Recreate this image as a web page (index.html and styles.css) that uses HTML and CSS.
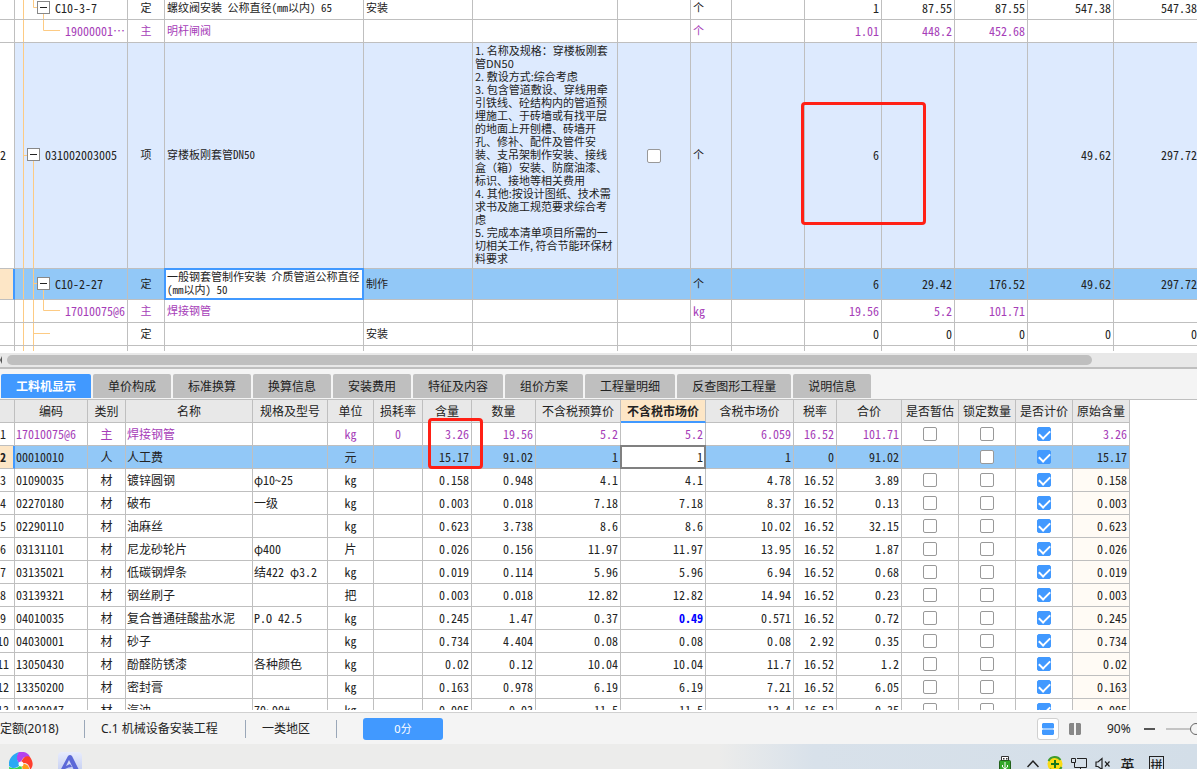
FILE: index.html
```html
<!DOCTYPE html>
<html lang="zh-CN">
<head>
<meta charset="utf-8">
<title>工料机显示</title>
<link rel="stylesheet" href="styles.css">
</head>
<body>
<main class="app">
<section class="pane bill-pane" aria-label="清单">
<table class="grid bill">
<colgroup><col class="w15"><col class="w113"><col class="w37"><col class="w199"><col class="w109"><col class="w145"><col class="w73"><col class="w41"><col class="w73"><col class="w77"><col class="w73"><col class="w73"><col class="w86"><col></colgroup>
<tbody>
<tr class="first"><td><td class="tree"><svg class="guide" aria-hidden="true"><path d="M8.500 0V30M18.500 0V7.500H23M28.500 12V30"/></svg><div class="node lv2"><button class="toggle" aria-label="折叠"></button>C10-3-7</div><td>定<td class="txt">螺纹阀安装 公称直径(mm以内) 65<td class="txt">安装<td><td><td class="txt">个<td><td>1<td>87.55<td>87.55<td>547.38<td>547.38
<tr class="main"><td><td class="tree"><svg class="guide" aria-hidden="true"><path d="M8.500 0V30M28.500 0V10.500H45"/></svg><div class="node lv3">19000001…</div><td>主<td class="txt">明杆闸阀<td><td><td><td class="txt">个<td><td>1.01<td>448.2<td>452.68<td><td>
<tr class="item"><td><div class="rn">2</div><td class="tree"><svg class="guide" aria-hidden="true"><path d="M8.500 0V226M8.500 112.500H13M18.500 116V226"/></svg><div class="node lv1"><button class="toggle" aria-label="折叠"></button>031002003005</div><td>项<td class="txt">穿楼板刚套管DN50<td><td class="txt desc">1. 名称及规格：穿楼板刚套<br>管DN50<br>2. 敷设方式:综合考虑<br>3. 包含管道敷设、穿线用牵<br>引铁线、砼结构内的管道预<br>埋施工、于砖墙或有找平层<br>的地面上开刨槽、砖墙开<br>孔、修补、配件及管件安<br>装、支吊架制作安装、接线<br>盒（箱）安装、防腐油漆、<br>标识、接地等相关费用<br>4. 其他:按设计图纸、技术需<br>求书及施工规范要求综合考<br>虑<br>5. 完成本清单项目所需的一<br>切相关工作, 符合节能环保材<br>料要求<td class="mid"><input type="checkbox" class="check" aria-label="选择清单项"><td class="txt">个<td><td>6<td><td><td>49.62<td>297.72
<tr class="selected"><td class="rowmark"><td class="tree"><svg class="guide" aria-hidden="true"><path d="M8.500 0V31M18.500 0V31M18.500 14.500H23M28.500 20V31"/></svg><div class="node lv2"><button class="toggle" aria-label="折叠"></button>C10-2-27</div><td>定<td class="editing"><textarea class="name-edit" aria-label="名称" spellcheck="false">一般钢套管制作安装 介质管道公称直径
(mm以内) 50</textarea><td class="txt">制作<td><td><td class="txt">个<td><td>6<td>29.42<td>176.52<td>49.62<td>297.72
<tr class="main"><td><td class="tree"><svg class="guide" aria-hidden="true"><path d="M8.500 0V30M18.500 0V30M28.500 0V10.500H45"/></svg><div class="node lv3">17010075@6</div><td>主<td class="txt">焊接钢管<td><td><td><td class="unit">kg<td><td>19.56<td>5.2<td>101.71<td><td>
<tr><td><td class="tree"><svg class="guide" aria-hidden="true"><path d="M8.500 0V30M18.500 0V30M18.500 10.500H35"/></svg><td>定<td><td class="txt">安装<td><td><td><td><td>0<td>0<td>0<td>0<td>0
<tr class="last"><td><td class="tree"><svg class="guide" aria-hidden="true"><path d="M8.500 0V30M18.500 0V30"/></svg><td><td><td><td><td><td><td><td><td><td><td><td>
</tbody>
</table>
<div class="mark mark-bill"></div>
</section>
<div class="hscroll"><span class="arrow"></span><span class="thumb"></span></div>
<nav class="tabs" aria-label="明细">
<button class="tab active">工料机显示</button><button class="tab">单价构成</button><button class="tab">标准换算</button><button class="tab">换算信息</button><button class="tab">安装费用</button><button class="tab">特征及内容</button><button class="tab">组价方案</button><button class="tab">工程量明细</button><button class="tab">反查图形工程量</button><button class="tab">说明信息</button>
</nav>
<section class="pane res-pane" aria-label="工料机显示">
<div class="clip">
<table class="grid res">
<colgroup><col class="w15"><col class="w73"><col class="w38"><col class="w127"><col class="w75"><col class="w46"><col class="w49"><col class="w49"><col class="w64"><col class="w85"><col class="w85"><col class="w88"><col class="w43"><col class="w65"><col class="w57"><col class="w57"><col class="w57"><col class="w57"></colgroup>
<thead>
<tr><th><th>编码<th>类别<th>名称<th>规格及型号<th>单位<th>损耗率<th>含量<th>数量<th>不含税预算价<th class="current">不含税市场价<th>含税市场价<th>税率<th>合价<th>是否暂估<th>锁定数量<th>是否计价<th>原始含量
</thead>
<tbody>
<tr class="main"><td><div class="rn">1</div><td>17010075@6<td>主<td>焊接钢管<td><td>kg<td>0<td>3.26<td>19.56<td>5.2<td>5.2<td>6.059<td>16.52<td>101.71<td><input type="checkbox" class="check" aria-label="是否暂估"><td><input type="checkbox" class="check" aria-label="锁定数量"><td><input type="checkbox" class="check" aria-label="是否计价" checked><td>3.26
<tr class="selected"><td class="rowmark"><div class="rn">2</div><td>00010010<td>人<td>人工费<td><td>元<td><td>15.17<td>91.02<td>1<td class="editing"><input type="text" class="price-edit" aria-label="不含税市场价" value="1"><td>1<td>0<td>91.02<td><td><input type="checkbox" class="check" aria-label="锁定数量"><td><input type="checkbox" class="check" aria-label="是否计价" checked><td>15.17
<tr><td><div class="rn">3</div><td>01090035<td>材<td>镀锌圆钢<td>φ10~25<td>kg<td><td>0.158<td>0.948<td>4.1<td>4.1<td>4.78<td>16.52<td>3.89<td><input type="checkbox" class="check" aria-label="是否暂估"><td><input type="checkbox" class="check" aria-label="锁定数量"><td><input type="checkbox" class="check" aria-label="是否计价" checked><td>0.158
<tr><td><div class="rn">4</div><td>02270180<td>材<td>破布<td>一级<td>kg<td><td>0.003<td>0.018<td>7.18<td>7.18<td>8.37<td>16.52<td>0.13<td><input type="checkbox" class="check" aria-label="是否暂估"><td><input type="checkbox" class="check" aria-label="锁定数量"><td><input type="checkbox" class="check" aria-label="是否计价" checked><td>0.003
<tr><td><div class="rn">5</div><td>02290110<td>材<td>油麻丝<td><td>kg<td><td>0.623<td>3.738<td>8.6<td>8.6<td>10.02<td>16.52<td>32.15<td><input type="checkbox" class="check" aria-label="是否暂估"><td><input type="checkbox" class="check" aria-label="锁定数量"><td><input type="checkbox" class="check" aria-label="是否计价" checked><td>0.623
<tr><td><div class="rn">6</div><td>03131101<td>材<td>尼龙砂轮片<td>φ400<td>片<td><td>0.026<td>0.156<td>11.97<td>11.97<td>13.95<td>16.52<td>1.87<td><input type="checkbox" class="check" aria-label="是否暂估"><td><input type="checkbox" class="check" aria-label="锁定数量"><td><input type="checkbox" class="check" aria-label="是否计价" checked><td>0.026
<tr><td><div class="rn">7</div><td>03135021<td>材<td>低碳钢焊条<td>结422 φ3.2<td>kg<td><td>0.019<td>0.114<td>5.96<td>5.96<td>6.94<td>16.52<td>0.68<td><input type="checkbox" class="check" aria-label="是否暂估"><td><input type="checkbox" class="check" aria-label="锁定数量"><td><input type="checkbox" class="check" aria-label="是否计价" checked><td>0.019
<tr><td><div class="rn">8</div><td>03139321<td>材<td>钢丝刷子<td><td>把<td><td>0.003<td>0.018<td>12.82<td>12.82<td>14.94<td>16.52<td>0.23<td><input type="checkbox" class="check" aria-label="是否暂估"><td><input type="checkbox" class="check" aria-label="锁定数量"><td><input type="checkbox" class="check" aria-label="是否计价" checked><td>0.003
<tr><td><div class="rn">9</div><td>04010035<td>材<td>复合普通硅酸盐水泥<td>P.O 42.5<td>kg<td><td>0.245<td>1.47<td>0.37<td class="changed">0.49<td>0.571<td>16.52<td>0.72<td><input type="checkbox" class="check" aria-label="是否暂估"><td><input type="checkbox" class="check" aria-label="锁定数量"><td><input type="checkbox" class="check" aria-label="是否计价" checked><td>0.245
<tr><td><div class="rn">10</div><td>04030001<td>材<td>砂子<td><td>kg<td><td>0.734<td>4.404<td>0.08<td>0.08<td>0.08<td>2.92<td>0.35<td><input type="checkbox" class="check" aria-label="是否暂估"><td><input type="checkbox" class="check" aria-label="锁定数量"><td><input type="checkbox" class="check" aria-label="是否计价" checked><td>0.734
<tr><td><div class="rn">11</div><td>13050430<td>材<td>酚醛防锈漆<td>各种颜色<td>kg<td><td>0.02<td>0.12<td>10.04<td>10.04<td>11.7<td>16.52<td>1.2<td><input type="checkbox" class="check" aria-label="是否暂估"><td><input type="checkbox" class="check" aria-label="锁定数量"><td><input type="checkbox" class="check" aria-label="是否计价" checked><td>0.02
<tr><td><div class="rn">12</div><td>13350200<td>材<td>密封膏<td><td>kg<td><td>0.163<td>0.978<td>6.19<td>6.19<td>7.21<td>16.52<td>6.05<td><input type="checkbox" class="check" aria-label="是否暂估"><td><input type="checkbox" class="check" aria-label="锁定数量"><td><input type="checkbox" class="check" aria-label="是否计价" checked><td>0.163
<tr><td><div class="rn">13</div><td>14030047<td>材<td>汽油<td>70~90#<td>kg<td><td>0.005<td>0.03<td>11.5<td>11.5<td>13.4<td>16.52<td>0.35<td><input type="checkbox" class="check" aria-label="是否暂估"><td><input type="checkbox" class="check" aria-label="锁定数量"><td><input type="checkbox" class="check" aria-label="是否计价" checked><td>0.005
</tbody>
</table>
</div>
<div class="mark mark-res"></div>
</section>
<footer class="status">
<span class="info quota">定额(2018)</span><span class="info major">C.1 机械设备安装工程</span><span class="info region">一类地区</span>
<button class="score">0分</button>
<div class="view">
<button class="view-btn on" aria-label="上下布局"><svg width="12" height="12" viewBox="0 0 12 12"><path d="M1 0H11L12 1V5L11 5.500H1L0 5V1ZM1 6.500H11L12 7V11L11 12H1L0 11V7Z"/></svg></button>
<button class="view-btn" aria-label="左右布局"><svg width="12" height="12" viewBox="0 0 12 12"><path d="M1 0H5V12H1L0 11V1ZM7 0H11L12 1V11L11 12H7Z"/></svg></button>
<span class="percent">90%</span>
<button class="minus" aria-label="缩小"></button>
<input type="range" class="zoom" aria-label="缩放" value="50">
</div>
</footer>
<div class="taskbar">
<svg width="24" height="24" viewBox="0 0 24 24" aria-hidden="true"><path fill="#b443ef" d="M12 12C7 10 6 4 10 0C16-1 21 2 21 6C17 3 12 6 12 12"/><path fill="#ff3f2e" d="M12 12C13 5 18 3 21 5C24 9 25 14 21 18C21 13 17 9 12 12"/><path fill="#ff9d1b" d="M12 12C18 11 21 15 20 19C17 24 12 25 9 23C13 21 15 17 12 12"/><path fill="#32d94d" d="M12 12C14 18 12 22 9 24C3 22 0 19 0 15C5 17 9 17 12 12"/><path fill="#2ba9f5" d="M12 12C8 17 3 17 0 14C-1 8 3 2 10 0C7 4 7 10 12 12"/><circle cx="12" cy="12" r="2.500" fill="#fff"/></svg>
<svg width="24" height="24" viewBox="0 0 24 24" aria-hidden="true"><defs><linearGradient id="tile" x2="0" y2="1"><stop stop-color="#e8ecfd"/><stop offset="1" stop-color="#bcc7ee"/></linearGradient></defs><rect width="24" height="24" rx="4" fill="url(#tile)"/><path fill="#5b68d8" d="M10 4Q12 2 14 4L21 18H16L11 8L8 14L12 12L14 15Q9 15 4 19H2Z"/></svg>
<div class="tray">
<svg class="usb" width="12" height="18" viewBox="0 0 12 18" aria-hidden="true"><path fill="#fff" stroke="#333" d="M2.500.5H9.500V5H2.500Z"/><path fill="#333" d="M4 2H5.500V3.500H4ZM7 2H8.500V3.500H7Z"/><rect x=".5" y="4.500" width="11" height="13" rx="1" fill="#32a628" stroke="#23611c"/><path fill="none" stroke="#fff" d="M6 6V15M3.500 9V11L6 13L8.500 11V9"/></svg>
<svg width="12" height="18" viewBox="0 0 12 18" aria-hidden="true"><path fill="none" stroke="#222" stroke-width="1.500" d="M.5 11L6 5L11.500 11"/></svg>
<svg width="16" height="18" viewBox="0 0 16 18" aria-hidden="true"><circle cx="8" cy="8" r="7.500" fill="#fadb14"/><path fill="none" stroke="#3e9c30" stroke-width="2" d="M1.500 5A7 7 0 0 1 13.500 4M14.500 11A7 7 0 0 1 3 13"/><path stroke="#18761b" stroke-width="2" d="M8 4V12M4 8H12"/></svg>
<svg width="16" height="18" viewBox="0 0 16 18" aria-hidden="true"><path fill="none" stroke="#222" d="M6 2.500H15.500V11.500H3.500V7M.5 2.500H4.500V6.500H.5ZM9.500 11V14M6 14.500H13"/></svg>
<svg width="16" height="18" viewBox="0 0 16 18" aria-hidden="true"><path fill="none" stroke="#222" stroke-width="1.200" d="M1 6H3L7 2.500V13.500L3 10.500H1ZM10 5.500L14.500 10.500M14.500 5.500L10 10.500"/></svg>
<span class="ime">英</span><span class="ime boxed">拼</span>
</div>
</div>
</main>
</body>
</html>
```
FILE: styles.css
```css
* { box-sizing: border-box; }
body {
  margin: 0;
  font-family: "Noto Sans CJK SC", sans-serif;
  font-size: 12px;
  color: #222;
  background: #fff;
}
button, input, textarea { font: inherit; color: inherit; margin: 0; padding: 0; border: 0; border-radius: 0; }
.app { display: flex; flex-direction: column; height: 100vh; overflow: hidden; }
.pane { position: relative; font-feature-settings: "hwid"; }
.bill-pane { flex: none; overflow: hidden; padding-bottom: 2px; }
.grid { table-layout: fixed; border-collapse: separate; border-spacing: 0; line-height: 13px; }
.grid td, .grid th {
  height: 23px;
  padding: 0 2px 2px;
  border-right: 1px solid #bfbfbf;
  border-bottom: 1px solid #bfbfbf;
  white-space: nowrap;
  overflow: hidden;
}
.w15 { width: 15px; } .w37 { width: 37px; } .w38 { width: 38px; } .w41 { width: 41px; }
.w43 { width: 43px; } .w46 { width: 46px; } .w49 { width: 49px; } .w57 { width: 57px; }
.w64 { width: 64px; } .w65 { width: 65px; } .w73 { width: 73px; } .w75 { width: 75px; }
.w77 { width: 77px; } .w85 { width: 85px; } .w86 { width: 86px; } .w88 { width: 88px; }
.w109 { width: 109px; } .w113 { width: 113px; } .w127 { width: 127px; } .w145 { width: 145px; }
.w199 { width: 199px; }

/* bill table */
.bill { width: 100%; }
.bill td { text-align: right; }
.bill td:nth-child(3) { text-align: center; font-size: 11px; }
.bill td:last-child { padding-right: 0; border-right: 0; }
.bill .txt { text-align: left; font-size: 11px; }
.bill .desc { font-feature-settings: normal; }
.bill .unit { text-align: left; }
.bill .mid { text-align: center; padding: 0; }
.bill .tree { position: relative; padding: 0 0 2px; text-align: left; }
.bill .first td { height: 20px; padding-bottom: 5px; }
.bill .last td { height: 5px; border-bottom: 0; }
.bill .item td { height: 226px; }
.bill .selected td { height: 31px; }
.bill .item td:not(:first-child) { background: #ddeafe; }
.grid .selected td { background: #92c8f7; }
.grid .main td { color: #a63db8; }
.grid .main td:first-child { color: #222; }
.grid .selected .rowmark { background: #fde6c6; border-right: 2px solid #4199ff; font-weight: 700; }
.guide { position: absolute; left: 0; top: 0; width: 100%; height: 100%; fill: none; stroke: #fdcb84; }
.node { position: relative; display: flex; align-items: center; gap: 5px; }
.lv1 { padding-left: 12px; }
.lv2 { padding-left: 22px; }
.lv3 { padding-left: 50px; }
.toggle { flex: none; width: 13px; height: 13px; border: 1px solid #888; background: linear-gradient(#222, #222) center / 7px 1px no-repeat #fff; }
.rn { display: flex; justify-content: center; width: 6px; margin-left: -2px; }

.check {
  appearance: none;
  display: block;
  width: 14px;
  height: 14px;
  margin: 0 auto;
  border: 1px solid #999;
  border-radius: 2px;
  background: #fff;
}
.check:checked { background: #4199ff; border-color: #4199ff; }
.check:checked::after {
  content: "";
  display: block;
  width: 9px;
  height: 5px;
  margin: 2px 0 0 1px;
  border: solid #fff;
  border-width: 0 0 2px 2px;
  transform: rotate(-45deg);
}
.grid .selected .editing { padding: 0; overflow: visible; }
.name-edit, .price-edit {
  display: block;
  position: relative;
  width: 100%;
  background: #fff;
  font-feature-settings: "hwid";
  outline: 0;
}
.name-edit {
  height: 30px;
  padding: 0 1px;
  border: 1px solid #4199ff;
  box-shadow: 0 0 0 1px #4199ff;
  font-size: 11px;
  line-height: 13px;
  resize: none;
  overflow: hidden;
  white-space: pre;
}
.price-edit { height: 22px; padding: 0 1px 2px; border: 1px solid #808080; box-shadow: 0 0 0 1px #808080; text-align: right; }
.mark { position: absolute; border: 3px solid #ff2015; border-radius: 4px; pointer-events: none; }
.mark-bill { left: 801px; top: 102px; width: 125px; height: 123px; }
.mark-res { left: 428px; top: 18px; width: 55px; height: 51px; }

.hscroll { flex: none; display: flex; align-items: center; gap: 5px; height: 16px; background: #e8e8e8; border-bottom: 2px solid #bfbfbf; }
.arrow { border: solid transparent; border-width: 4px 0; border-right: 2px solid #555; }
.thumb { width: 1085px; height: 10px; border-radius: 5px; background: #bfbfbf; }

.tabs { flex: none; display: flex; gap: 2px; padding: 5px 1px 1px; background: #f4f4f4; border-bottom: 1px solid #bfbfbf; }
.tab { height: 24px; padding: 0 15px 1px; background: #bfbfbf; border-radius: 2px 2px 0 0; white-space: nowrap; }
.tab.active { background: #4199ff; color: #fff; font-weight: 700; }

/* resource table */
.res-pane { flex: 1; min-height: 0; padding-bottom: 2px; }
.clip { height: 100%; overflow: hidden; }
.res { width: 1130px; }
.res th { background: #e8e8e8; font-weight: 400; text-align: center; padding: 0 0 1px; }
.res .current { background: #fde6c6; border-bottom: 2px solid #4199ff; font-weight: 700; }
.res td { text-align: right; }
.res td:nth-child(2), .res td:nth-child(4), .res td:nth-child(5) { text-align: left; padding: 0 1px 2px; }
.res td:nth-child(3), .res td:nth-child(6), .res td:nth-child(7) { text-align: center; }
.res td:nth-child(15), .res td:nth-child(16), .res td:nth-child(17) { padding: 0; }
.res tr:nth-child(n+3) td:last-child { background: #fffbf5; }
.res .changed { color: #00f; font-weight: 700; }

.status { flex: none; display: flex; align-items: center; height: 32px; border-top: 1px solid #d0d0d0; background: #f4f4f4; overflow: hidden; font-family: "Noto Sans", "Noto Sans CJK SC", sans-serif; }
.info { height: 18px; line-height: 18px; border-right: 1px solid #9aa7b8; white-space: nowrap; }
.quota { width: 85px; }
.major { width: 161px; padding-left: 16px; }
.region { width: 91px; padding-left: 16px; }
.score { width: 80px; height: 22px; margin-left: 26px; border-radius: 3px; background: #4199ff; color: #fff; font-size: 11px; line-height: 16px; }
.view { display: flex; align-items: center; flex: none; margin-left: auto; margin-right: -29px; }
.view-btn { display: flex; align-items: center; justify-content: center; width: 22px; height: 22px; margin-right: 5px; background: none; fill: #888; }
.view-btn.on { border: 1px solid #d0d0d0; border-radius: 3px; background: #fff; fill: #4199ff; }
.percent { width: 32px; margin-left: 16px; }
.minus { width: 11px; height: 2px; margin: 0 11px 0 5px; background: #555; }
.zoom { appearance: none; width: 60px; height: 14px; background: linear-gradient(#c4c4c4, #c4c4c4) center / 100% 2px no-repeat; }
.zoom::-webkit-slider-thumb { appearance: none; width: 12px; height: 12px; border: 1px solid #666; border-radius: 6px; background: #f4f4f4; }

.taskbar { flex: none; display: flex; gap: 25px; height: 25px; padding: 8px 33px 0 9px; overflow: hidden; background: linear-gradient(90deg, #ececeb 60%, #d8e1ea 68%, #d3dee8); }
.taskbar svg { flex: none; }
.tray { display: flex; gap: 8px; margin-left: auto; margin-top: 4px; }
.usb { margin-right: 8px; }
.ime { width: 15px; margin-left: 1px; font-size: 14px; font-weight: 500; line-height: 16px; text-align: center; }
.boxed { height: 17px; margin-left: 6px; border: 1px solid #222; font-size: 12px; line-height: 15px; }
```
